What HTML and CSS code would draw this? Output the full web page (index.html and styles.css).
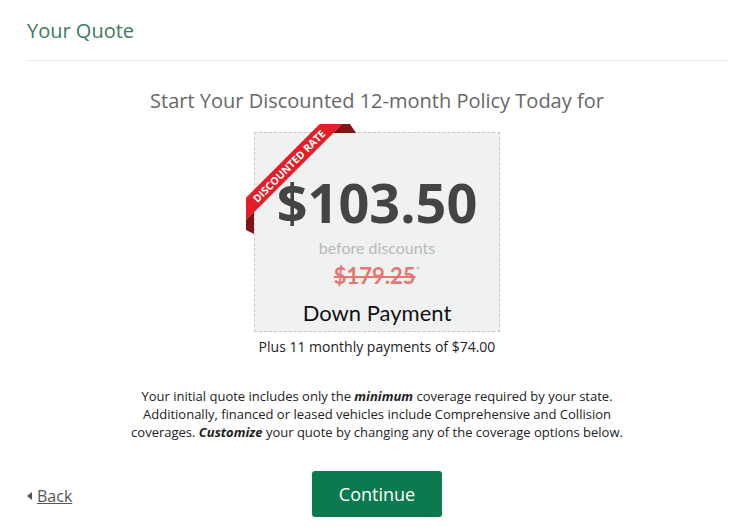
FILE: index.html
```html
<!DOCTYPE html>
<html>
<head>
    <title>Your Quote</title>
    <link rel="stylesheet" href="styles.css">
</head>
<body>
    <div class="page">
        <h1 class="page-title">Your Quote</h1>
        <hr class="divider">
        <h2 class="offer-title">Start Your Discounted 12-month Policy Today for</h2>
        <div class="price-box">
            <div class="ribbon"><span>DISCOUNTED RATE</span></div>
            <div class="price">$103.50</div>
            <div class="before">before discounts</div>
            <div class="old-price"><s>$179.25</s><sup>*</sup></div>
            <div class="down">Down Payment</div>
        </div>
        <p class="monthly">Plus 11 monthly payments of $74.00</p>
        <p class="note">Your initial quote includes only the <b><i>minimum</i></b> coverage required by your state. Additionally, financed or leased vehicles include Comprehensive and Collision coverages. <b><i>Customize</i></b> your quote by changing any of the coverage options below.</p>
        <div class="actions">
            <a class="back" href="#"><span class="arrow"></span>Back</a>
            <button type="button" class="continue">Continue</button>
            <span></span>
        </div>
    </div>
</body>
</html>
```

FILE: styles.css
```css
body, html {
    margin: 0;
    padding: 0;
    background-color: #fff;
    font-family: "Open Sans", "DejaVu Sans", sans-serif;
}
.page {
    padding: 17px 7px 0 27px;
    display: flex;
    flex-direction: column;
    align-items: center;
}
.page-title {
    align-self: stretch;
    margin: 0;
    font-size: 20px;
    line-height: 28px;
    font-weight: normal;
    color: #3b7b5e;
}
.divider {
    align-self: stretch;
    margin: 15px 0 0 0;
    border: 0;
    border-top: 1px solid #e6e6e6;
}
.offer-title {
    margin: 27px 0 0 0;
    font-size: 20px;
    line-height: 26px;
    font-weight: normal;
    color: #676767;
}
.price-box {
    position: relative;
    box-sizing: border-box;
    width: 246px;
    height: 200px;
    margin-top: 18px;
    padding-top: 39px;
    background-color: #eff2f1;
    border: 1px dashed #c9c9c9;
    display: flex;
    flex-direction: column;
    align-items: center;
}
.ribbon {
    position: absolute;
    top: -9px;
    left: -9px;
    width: 110px;
    height: 110px;
    overflow: hidden;
}
.ribbon::before, .ribbon::after {
    content: "";
    position: absolute;
    background-color: #7e1519;
}
.ribbon::before {
    left: 86px;
    top: 0;
    width: 24px;
    height: 9px;
    clip-path: polygon(10px 0, 18px 0, 24px 9px, 1px 9px);
}
.ribbon::after {
    left: 0;
    top: 87px;
    width: 8px;
    height: 23px;
    clip-path: polygon(0 9px, 8px 1px, 8px 23px, 0 19px);
}
.ribbon span {
    position: absolute;
    left: -32px;
    top: 34px;
    width: 150px;
    height: 16px;
    line-height: 16px;
    transform: rotate(-45deg);
    background-color: #e41e26;
    color: #fff;
    font-size: 10.5px;
    font-weight: bold;
    text-align: center;
}
.price {
    font-size: 54px;
    line-height: 60px;
    font-weight: bold;
    color: #444;
}
.before {
    margin-top: 6px;
    font-family: Lato, sans-serif;
    font-size: 16px;
    line-height: 20px;
    color: #b9b9b9;
}
.old-price {
    margin-top: 4px;
    font-family: Lato, sans-serif;
    font-size: 22px;
    line-height: 28px;
    font-weight: bold;
    color: #e87573;
}
.old-price s {
    text-decoration-thickness: 2px;
}
.old-price sup {
    font-size: 11px;
    font-weight: normal;
    color: #bbb;
    vertical-align: 9px;
    line-height: 0;
}
.down {
    margin-top: 9px;
    font-family: Lato, sans-serif;
    font-size: 22px;
    line-height: 28px;
    color: #111;
}
.monthly {
    margin: 6px 0 0 0;
    font-size: 14px;
    line-height: 18px;
    color: #222;
}
.note {
    max-width: 500px;
    margin: 31px 0 0 0;
    font-size: 13px;
    line-height: 18px;
    text-align: center;
    color: #222;
}
.actions {
    align-self: stretch;
    margin-top: 30px;
    display: grid;
    grid-template-columns: 1fr auto 1fr;
    align-items: center;
}
.back {
    justify-self: start;
    display: flex;
    align-items: center;
    padding-top: 3px;
    font-size: 16px;
    color: #555;
    text-decoration: underline;
}
.arrow {
    width: 0;
    height: 0;
    margin-right: 5px;
    border-top: 4px solid transparent;
    border-bottom: 4px solid transparent;
    border-right: 5px solid #555;
}
.continue {
    width: 130px;
    height: 46px;
    border: 0;
    border-radius: 3px;
    background-color: #0b7a4f;
    color: #fff;
    font-family: "Open Sans", sans-serif;
    font-size: 18px;
    cursor: pointer;
}
```
